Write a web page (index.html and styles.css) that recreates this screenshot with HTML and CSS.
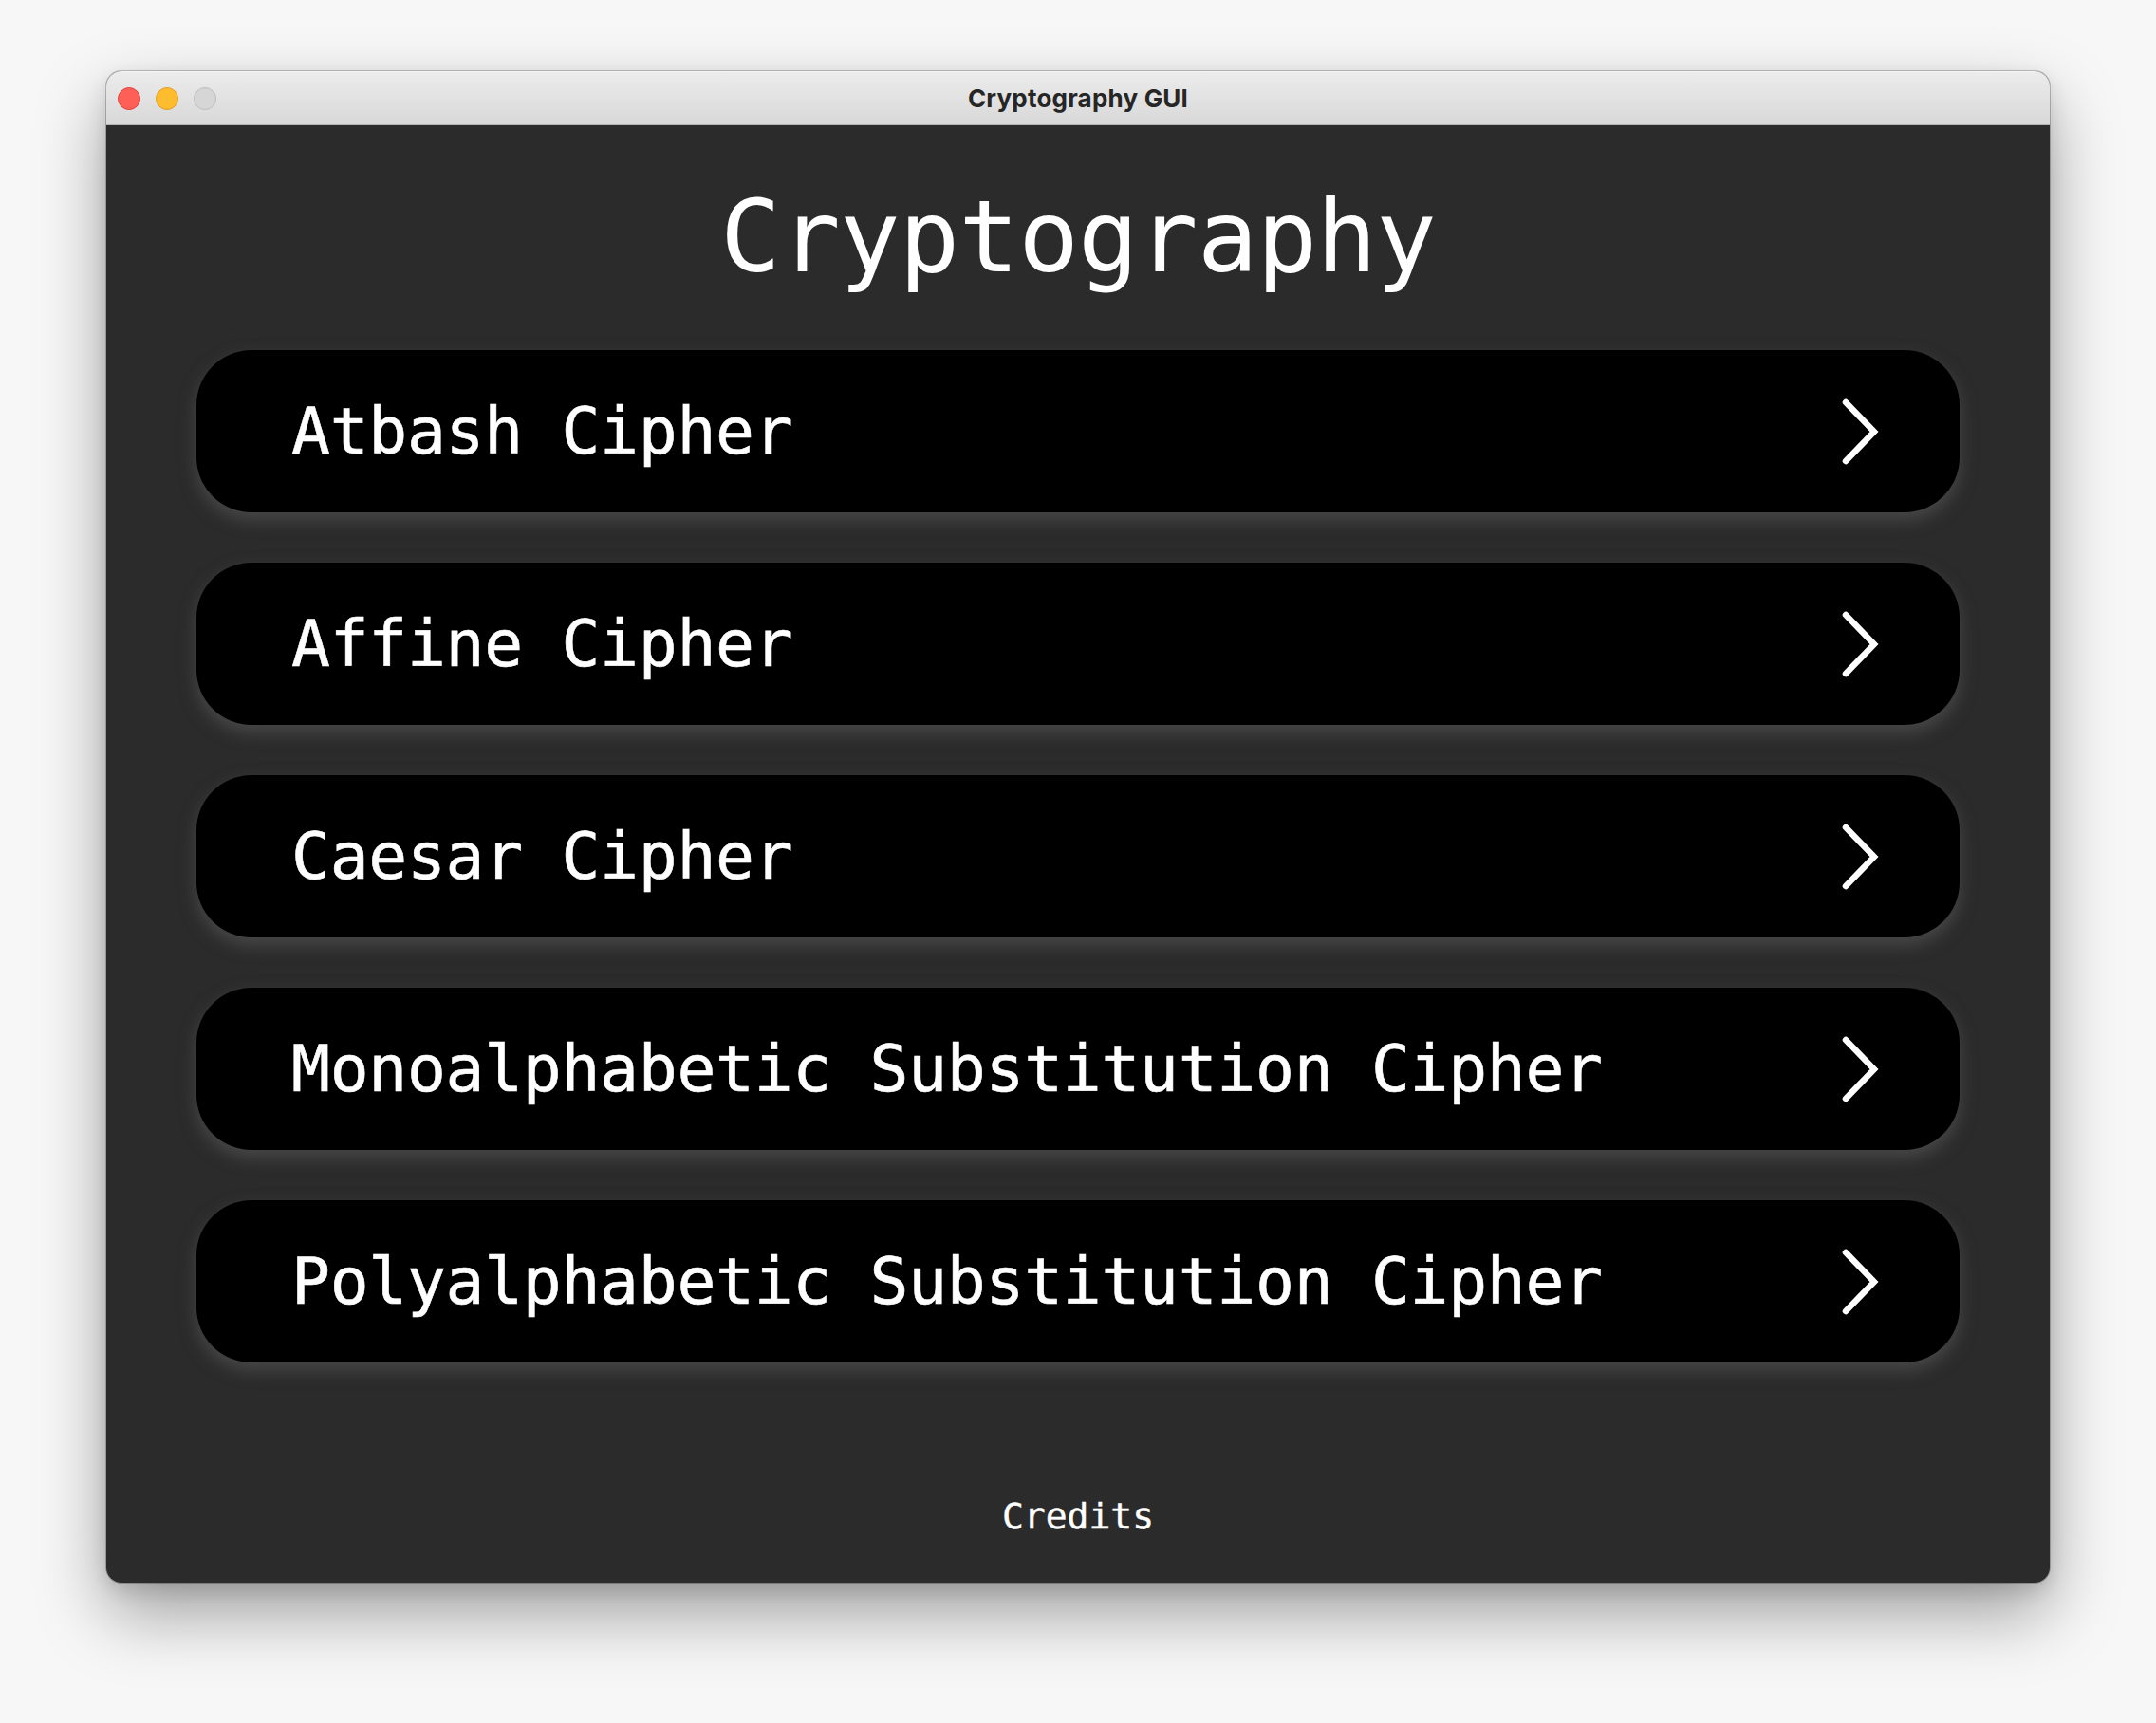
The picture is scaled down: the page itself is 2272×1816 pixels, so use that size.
FILE: index.html
```html
<!DOCTYPE html>
<html lang="en">
<head>
<meta charset="utf-8">
<title>Cryptography GUI</title>
<link rel="stylesheet" href="styles.css">
</head>
<body>
<div class="desktop">
  <div class="window">
    <div class="titlebar">
      <div class="lights">
        <span class="light red"></span>
        <span class="light yellow"></span>
        <span class="light gray"></span>
      </div>
      <div class="title">Cryptography GUI</div>
      <div class="spacer"></div>
    </div>
    <div class="content">
      <h1 class="heading">Cryptography</h1>
      <div class="menu">
        <div class="item"><span class="label">Atbash Cipher</span><svg class="chev" viewBox="0 0 48 76" width="48" height="76"><path d="M8 7 L38 38 L8 69"/></svg></div>
        <div class="item"><span class="label">Affine Cipher</span><svg class="chev" viewBox="0 0 48 76" width="48" height="76"><path d="M8 7 L38 38 L8 69"/></svg></div>
        <div class="item"><span class="label">Caesar Cipher</span><svg class="chev" viewBox="0 0 48 76" width="48" height="76"><path d="M8 7 L38 38 L8 69"/></svg></div>
        <div class="item"><span class="label">Monoalphabetic Substitution Cipher</span><svg class="chev" viewBox="0 0 48 76" width="48" height="76"><path d="M8 7 L38 38 L8 69"/></svg></div>
        <div class="item"><span class="label">Polyalphabetic Substitution Cipher</span><svg class="chev" viewBox="0 0 48 76" width="48" height="76"><path d="M8 7 L38 38 L8 69"/></svg></div>
      </div>
      <div class="credits">Credits</div>
    </div>
  </div>
</div>
</body>
</html>
```

FILE: styles.css
```css
html, body {
  margin: 0;
  padding: 0;
}
body {
  background: #f7f7f7;
  width: 2272px;
  height: 1816px;
  overflow: hidden;
}
.desktop {
  padding: 75px 112px;
}
.window {
  width: 2048px;
  border-radius: 16px;
  overflow: hidden;
  box-shadow: 0 0 0 1px rgba(0,0,0,0.22), 0 32px 72px rgba(0,0,0,0.36), 0 8px 20px rgba(0,0,0,0.12);
  background: #2b2b2b;
}
.titlebar {
  height: 55px;
  display: grid;
  grid-template-columns: 1fr auto 1fr;
  align-items: center;
  background: linear-gradient(#ececec, #d8d8d8);
  border-top: 1px solid #f6f6f6;
  border-bottom: 1px solid #b4b4b4;
  box-sizing: content-box;
}
.lights {
  display: flex;
  gap: 16px;
  padding-left: 12px;
}
.light {
  width: 22px;
  height: 22px;
  border-radius: 50%;
  border: 1px solid transparent;
}
.red { background: #fe5f57; border-color: #e1443f; }
.yellow { background: #febc2e; border-color: #dfa023; }
.gray { background: #d6d6d6; border-color: #bdbdbd; }
.title {
  font-family: Inter, "Open Sans", "Liberation Sans", sans-serif;
  font-weight: 700;
  font-size: 26px;
  color: #262626;
  letter-spacing: 0.2px;
}
.content {
  height: 1536px;
  box-sizing: border-box;
  padding: 65px 95px 51px 95px;
  display: flex;
  flex-direction: column;
  font-family: "DejaVu Sans Mono", "Liberation Mono", monospace;
  color: #ffffff;
}
.heading {
  margin: 0;
  font-weight: 400;
  font-size: 106px;
  line-height: 1;
  text-align: center;
  letter-spacing: -1px;
}
.menu {
  margin-top: 66px;
  display: flex;
  flex-direction: column;
  gap: 53px;
}
.item {
  height: 171px;
  background: #000;
  border-radius: 58px;
  display: flex;
  align-items: center;
  justify-content: space-between;
  padding: 0 80px 0 100px;
  box-shadow: 0 8px 18px rgba(96,96,96,0.55);
}
.label {
  font-size: 68px;
  line-height: 1;
  white-space: nowrap;
  letter-spacing: -0.3px;
  -webkit-text-stroke: 0.6px #ffffff;
}
.chev {
  display: block;
  fill: none;
  stroke: #ffffff;
  stroke-width: 6.5;
  stroke-linecap: round;
  stroke-linejoin: miter;
}
.credits {
  margin-top: auto;
  text-align: center;
  font-size: 38px;
  line-height: 1;
  -webkit-text-stroke: 0.4px #ffffff;
}
```
